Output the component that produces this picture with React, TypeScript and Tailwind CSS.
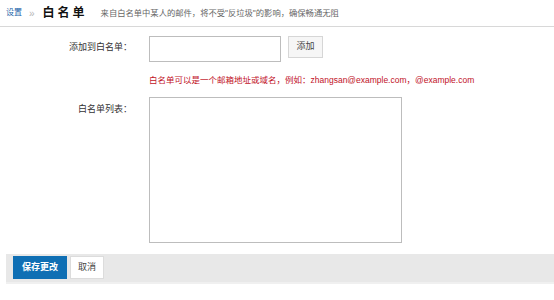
export default function App() {
  const font = { fontFamily: '"Liberation Sans", "Noto Sans CJK SC", sans-serif' }
  return (
    <div className="w-[554px] h-[300px] bg-white text-[9px] text-[#333]" style={font}>
      <div className="flex items-center h-[27px] pl-[6px] border-b border-[#d8d8d8]">
        <span className="text-[#1a5fa8] text-[8px]">设置</span>
        <span className="text-[#b5b5b5] ml-[7px] mr-[8px] text-[10px]">»</span>
        <span className="text-[12px] font-bold text-[#111] tracking-[3px]">白名单</span>
        <span className="text-[#666] ml-[13px] text-[8.3px]">来自白名单中某人的邮件，将不受"反垃圾"的影响，确保畅通无阻</span>
      </div>

      <div className="flex mt-[9px]">
        <div className="w-[132px] text-right pt-[5px]">添加到白名单：</div>
        <div className="ml-[17px]">
          <div className="flex items-start">
            <input className="w-[132px] h-[26px] border border-[#bdbdbd] outline-none" />
            <button className="ml-[7px] w-[35px] h-[22px] border border-[#d6d6d6] bg-[#f6f6f6] text-[#444]">
              添加
            </button>
          </div>
          <div className="mt-[12px] text-[#c1121f] text-[8.5px]">
            白名单可以是一个邮箱地址或域名，例如：zhangsan@example.com，@example.com
          </div>
        </div>
      </div>

      <div className="flex mt-[10px]">
        <div className="w-[132px] text-right pt-[6px]">白名单列表：</div>
        <textarea className="ml-[17px] w-[253px] h-[146px] border border-[#bdbdbd] outline-none resize-none" />
      </div>

      <div className="ml-[6px] mt-[11px] h-[30px] bg-[#e8e8e8] border-b-2 border-[#f0f0f0] flex items-center pl-[7px] gap-[3px]">
        <button className="w-[54px] h-[23px] bg-[#0f6fb4] text-white font-bold">保存更改</button>
        <button className="w-[34px] h-[23px] bg-white border border-[#dcdcdc] text-[#444]">取消</button>
      </div>
    </div>
  )
}
